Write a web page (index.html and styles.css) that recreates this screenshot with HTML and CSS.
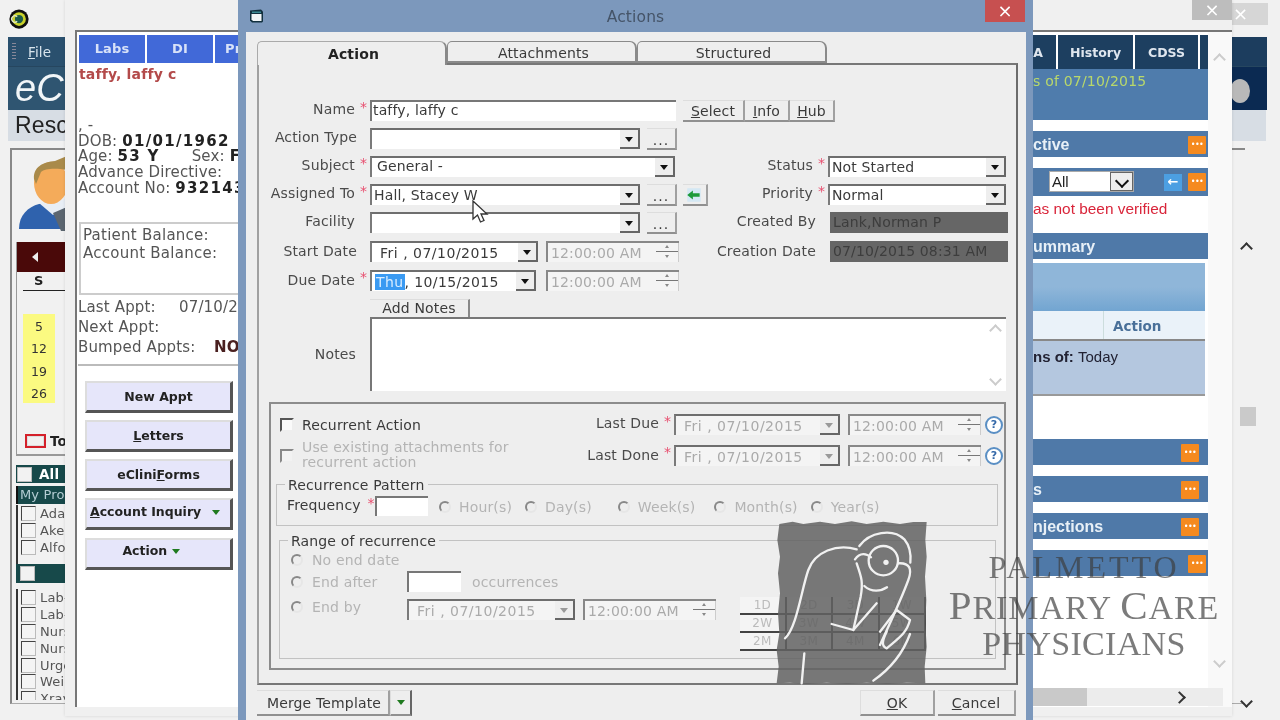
FILE: index.html
```html
<!DOCTYPE html>
<html lang="en">
<head>
<meta charset="utf-8">
<title>Actions</title>
<link rel="stylesheet" href="styles.css">
</head>
<body>
<div class="desk">

  <section class="win back">
    <div class="back-top">
      <svg class="app-logo" viewBox="0 0 24 24"><circle cx="12" cy="12" r="10.5" fill="#111"/><circle cx="12" cy="12" r="7.5" fill="#c9d22b"/><circle cx="12" cy="12" r="4.5" fill="#1c5a4a"/><path d="M10 9.500a3.500 3.500 0 1 0 0 5" fill="none" stroke="#dfe8c8" stroke-width="1.400"/></svg>
      <span class="back-close">×</span>
    </div>
    <div class="back-bar">
      <div class="menu-row"><i class="grip"></i><span class="menu-item"><u>F</u>ile</span></div>
      <div class="brand-row">eC</div>
    </div>
    <div class="back-strip">Resc</div>
    <div class="back-box">
      <svg class="user-pic" viewBox="0 0 48 76"><path d="M0 74c0-14 9-22 20-25l28-3v28z" fill="#2f62ad"/><path d="M20 48l14 12 14-8v-8l-20 2z" fill="#e8eef5"/><path d="M34 58l8 18h6V52z" fill="#5c6670"/><ellipse cx="32" cy="28" rx="17" ry="21" fill="#f4ab5a"/><path d="M15 24c-1-12 9-17 21-18l12-5v14c-10-2-22-2-26 2l-5 12z" fill="#a98a4a"/></svg>
      <div class="cal">
        <div class="cal-head"><i class="cal-prev"></i></div>
        <div class="cal-day">S</div>
        <ul class="cal-dates"><li>5</li><li>12</li><li>19</li><li>26</li></ul>
      </div>
      <div class="today"><i class="today-box"></i><b>To</b></div>
      <div class="green-bar"><i class="chk chk-w"></i><b>All</b></div>
      <div class="prov-head">My Prov</div>
      <ul class="chk-list">
        <li><i class="chk"></i>Adan</li><li><i class="chk"></i>Aker</li><li><i class="chk"></i>Alfor</li>
      </ul>
      <div class="green-bar green-bar-2"><i class="chk chk-w"></i></div>
      <ul class="chk-list chk-list-2">
        <li><i class="chk"></i>Lab-</li><li><i class="chk"></i>Lab-</li><li><i class="chk"></i>Nurs</li><li><i class="chk"></i>Nurs</li><li><i class="chk"></i>Urge</li><li><i class="chk"></i>Weig</li><li><i class="chk"></i>Xrav</li>
      </ul>
    </div>
    <div class="back-scroll">
      <span class="chev chev-up"></span>
      <span class="back-thumb"></span>
      <span class="chev chev-down"></span>
    </div>
  </section>

  <section class="win mid">
    <div class="mid-top"><span class="mid-close">×</span></div>
    <div class="mid-body">
      <div class="pt">
        <div class="pt-tabs"><span>Labs</span><span>DI</span><span class="pt-tab-3">Pr</span></div>
        <div class="pt-name">taffy, laffy c</div>
        <div class="pt-info">
          <div>, -</div>
          <div>DOB: <b>01/01/1962</b></div>
          <div>Age: <b>53 Y</b> <span class="pt-sex">Sex: <b>F</b></span></div>
          <div>Advance Directive:</div>
          <div>Account No: <b>932143</b></div>
        </div>
        <div class="pt-bal">
          <div>Patient Balance:</div>
          <div>Account Balance:</div>
        </div>
        <div class="pt-appts">
          <div><span class="appt-l">Last Appt:</span>07/10/2</div>
          <div>Next Appt:</div>
          <div><span class="appt-l">Bumped Appts:</span><b>NO</b></div>
        </div>
        <div class="pt-btns">
          <button class="side-btn">New Appt</button>
          <button class="side-btn"><u>L</u>etters</button>
          <button class="side-btn">eClini<u>F</u>orms</button>
          <button class="side-btn side-btn-l"><u>A</u>ccount Inquiry <i class="tri-g"></i></button>
          <button class="side-btn side-btn-a"><span class="nudge">Action <i class="tri-g tri-g-near"></i></span></button>
        </div>
      </div>
      <div class="summary">
        <div class="sum-tabs"><span class="t-a">A</span><span class="t-h">History</span><span class="t-c">CDSS</span><span class="t-x"></span></div>
        <div class="sum-hero">s of 07/10/2015</div>
        <div class="sum-bar">ctive<i class="dots"></i></div>
        <div class="sum-bar sum-bar-sel">
          <span class="all-sel"><span>All</span><i class="all-drop"></i></span>
          <i class="back-arrow"></i><i class="dots"></i>
        </div>
        <div class="sum-warn">as not been verified</div>
        <div class="sum-bar sum-bar-s">ummary</div>
        <div class="sum-grad"></div>
        <div class="sum-th"><span>Action</span></div>
        <div class="sum-row">ns of: <span>Today</span></div>
        <div class="sum-blank"></div>
        <div class="sum-bar sum-bar-m"><i class="dots dots-l"></i></div>
        <div class="sum-bar sum-bar-m">s<i class="dots dots-l"></i></div>
        <div class="sum-bar sum-bar-m">njections<i class="dots dots-l"></i></div>
        <div class="sum-bar sum-bar-m"><i class="dots"></i></div>
      </div>
      <div class="mid-scroll">
        <span class="chev chev-up chev-pale"></span>
        <span class="chev chev-down chev-pale"></span>
      </div>
    </div>
    <div class="mid-hscroll"><span class="h-thumb"></span><span class="h-next"></span></div>
  </section>

  <section class="win dlg">
    <header class="dlg-title">
      <svg class="dlg-icon" viewBox="0 0 14 14"><path d="M0 1.500l11-1 2 2v10l-1 1H2l-2-2z" fill="#12303f"/><path d="M1.500 5h10v7H3l-1.500-1.500z" fill="#f2f6f8"/><path d="M2 2.500h9v1.500H2z" fill="#3c8a94"/></svg>
      <span class="dlg-name">Actions</span>
      <span class="dlg-close">×</span>
    </header>
    <div class="dlg-body">
      <nav class="tabs">
        <span class="tab tab-on">Action</span>
        <span class="tab">Attachments</span>
        <span class="tab">Structured</span>
      </nav>
      <div class="panel">

        <div class="row">
          <label class="lbl">Name</label><span class="star">*</span>
          <span class="inp w-name">taffy, laffy c</span>
          <span class="btn-set">
            <span class="btn b-sel"><u>S</u>elect</span><span class="btn b-inf"><u>I</u>nfo</span><span class="btn b-hub"><u>H</u>ub</span>
          </span>
        </div>
        <div class="row">
          <label class="lbl lbl-ns">Action Type</label><span class="star star-ns"></span>
          <span class="combo w-270"><span class="val"></span><i class="drop"></i></span>
          <span class="btn dots-btn">...</span>
        </div>
        <div class="row">
          <label class="lbl">Subject</label><span class="star">*</span>
          <span class="combo w-305"><span class="val val-in">General -</span><i class="drop"></i></span>
          <div class="rgroup">
            <label class="lbl">Status</label><span class="star">*</span>
            <span class="combo w-178"><span class="val">Not Started</span><i class="drop"></i></span>
          </div>
        </div>
        <div class="row">
          <label class="lbl">Assigned To</label><span class="star">*</span>
          <span class="combo w-270"><span class="val">Hall, Stacey W</span><i class="drop"></i></span>
          <span class="btn dots-btn">...</span>
          <span class="btn arrow-btn"><svg viewBox="0 0 16 16"><rect x="2" y="2" width="12" height="12" fill="#d4e8f4"/><path d="M2 8l5-4v2.500h6v3H7V12z" fill="#1c9a3a"/></svg></span>
          <div class="rgroup">
            <label class="lbl">Priority</label><span class="star">*</span>
            <span class="combo w-178"><span class="val">Normal</span><i class="drop"></i></span>
          </div>
        </div>
        <div class="row">
          <label class="lbl">Facility</label><span class="star"></span>
          <span class="combo w-270"><span class="val"></span><i class="drop"></i></span>
          <span class="btn dots-btn">...</span>
          <div class="rgroup rgroup-ro">
            <label class="lbl">Created By</label>
            <span class="ro">Lank,Norman P</span>
          </div>
        </div>
        <div class="row row-d">
          <label class="lbl lbl-ns">Start Date</label><span class="star star-ns"></span>
          <span class="combo w-168"><span class="val val-d">Fri , 07/10/2015</span><i class="drop"></i></span>
          <span class="time"><span>12:00:00 AM</span><i class="spin"></i></span>
          <div class="rgroup rgroup-ro">
            <label class="lbl">Creation Date</label>
            <span class="ro">07/10/2015 08:31 AM</span>
          </div>
        </div>
        <div class="row row-d">
          <label class="lbl">Due Date</label><span class="star">*</span>
          <span class="combo w-166"><span class="val val-s"><span class="sel">Thu</span>, 10/15/2015</span><i class="drop"></i></span>
          <span class="time time-2"><span>12:00:00 AM</span><i class="spin"></i></span>
        </div>
        <div class="notes-tab"><span>Add Notes</span></div>
        <div class="notes-row">
          <label class="lbl">Notes</label><span class="star"></span>
          <div class="notes"><span class="chev chev-up chev-pale"></span><span class="chev chev-down chev-pale"></span></div>
        </div>

        <div class="group">
          <div class="rec-row">
            <i class="chk chk-big"></i><span class="rec-text">Recurrent Action</span>
            <label class="lbl">Last Due</label><span class="star">*</span>
            <span class="combo combo-off w-166"><span class="val val-d">Fri , 07/10/2015</span><i class="drop"></i></span>
            <span class="time"><span>12:00:00 AM</span><i class="spin"></i></span>
            <i class="help">?</i>
          </div>
          <div class="rec-row rec-row-2">
            <i class="chk chk-big chk-off"></i><span class="rec-text rec-off">Use existing attachments for<br>recurrent action</span>
            <label class="lbl">Last Done</label><span class="star">*</span>
            <span class="combo combo-off w-166"><span class="val val-d">Fri , 07/10/2015</span><i class="drop"></i></span>
            <span class="time"><span>12:00:00 AM</span><i class="spin"></i></span>
            <i class="help">?</i>
          </div>

          <fieldset class="fs fs-1">
            <legend>Recurrence Pattern</legend>
            <div class="freq">
              <label class="freq-l">Frequency</label><span class="star">*</span>
              <span class="inp w-freq"></span>
              <span class="opt o-1"><i class="radio"></i>Hour(s)</span>
              <span class="opt o-2"><i class="radio"></i>Day(s)</span>
              <span class="opt o-3"><i class="radio"></i>Week(s)</span>
              <span class="opt o-4"><i class="radio"></i>Month(s)</span>
              <span class="opt o-5"><i class="radio"></i>Year(s)</span>
            </div>
          </fieldset>

          <fieldset class="fs fs-2">
            <legend>Range of recurrence</legend>
            <div class="range">
              <div class="range-l">
                <div class="r-row r-1"><i class="radio"></i><span class="r-text">No end date</span></div>
                <div class="r-row r-2"><i class="radio"></i><span class="r-text">End after</span><span class="inp w-occ"></span><span class="r-occ">occurrences</span></div>
                <div class="r-row r-3"><i class="radio"></i><span class="r-text">End by</span>
                  <span class="combo combo-off w-168"><span class="val val-d">Fri , 07/10/2015</span><i class="drop"></i></span>
                  <span class="time"><span>12:00:00 AM</span><i class="spin"></i></span>
                </div>
              </div>
              <div class="quick">
                <span>1D</span><span>2D</span><span>3D</span><span>1W</span>
                <span>2W</span><span>3W</span><span>4W</span><span>5W</span>
                <span>2M</span><span>3M</span><span>4M</span><span>6M</span>
              </div>
            </div>
          </fieldset>
        </div>
      </div>
      <footer class="dlg-foot">
        <span class="btn f-merge">Merge Template</span>
        <span class="btn f-split"><i class="tri-g"></i></span>
        <span class="btn f-ok"><u>O</u>K</span>
        <span class="btn f-cancel"><u>C</u>ancel</span>
      </footer>
    </div>
  </section>

  <svg class="cursor" viewBox="0 0 18 24"><path d="M2 1v18l4.500-4 3 7 3.500-1.500-3-6.500h6z" fill="#fff" stroke="#333" stroke-width="1.300"/></svg>

  <svg class="wm-mark" viewBox="0 0 960 960">
    <path d="M178 372L218 365L250 372L300 365L345 372L395 364L440 372L490 365L540 372L580 366L620 366L616 420L620 470L615 530L619 600L616 670L620 740L614 800L616 850L560 848L500 852L440 848L380 852L320 848L260 852L210 848L170 850L176 800L170 750L178 700L174 640L180 580L174 520L180 470L172 420Z" fill="#626262" fill-opacity=".85"/>
    <g fill="none" stroke="#f1f1f1" stroke-width="7" stroke-linecap="round" stroke-linejoin="round">
      <path d="M195 715c35-30 50-150 70-205 20-55 85-80 145-62"/>
      <path d="M418 438c30-42 100-55 135-20 18 22 20 50 18 70"/>
      <circle cx="490" cy="482" r="44"/>
      <path d="M405 478c15-22 35-18 48-6"/>
      <path d="M535 490c35-2 42 18 30 50-22 60-60 140-85 195"/>
      <path d="M433 558c22 20 50 16 68 4"/>
      <path d="M410 490c14 40 20 55 12 100l-22 100"/>
      <path d="M335 672l65 18 70-80"/>
      <path d="M480 695l50-65 40 30c-10 40-35 55-70 85-15-6-15-20 0-50"/>
      <path d="M245 850l8-90"/>
      <path d="M460 842c50-35 90-85 110-140"/>
    </g>
    <circle cx="498" cy="487" r="8" fill="#f1f1f1"/>
  </svg>
  <div class="wm-text">
    <div class="wm-1">PALMETTO</div>
    <div class="wm-2"><span class="wm-cap">P</span>RIMARY <span class="wm-cap">C</span>ARE</div>
    <div class="wm-3">PHYSICIANS</div>
  </div>
</div>
</body>
</html>
```
FILE: styles.css
```css
* { box-sizing: border-box; }
html, body { margin: 0; padding: 0; }
body { background: #f0f0f0; }
i { display: inline-block; font-style: normal; }
ul { list-style: none; margin: 0; padding: 0; }
u { text-decoration: underline; }

.desk {
  position: relative;
  width: 1280px;
  height: 720px;
  overflow: hidden;
  font-family: "DejaVu Sans", sans-serif;
  font-size: 14px;
  letter-spacing: .15px;
  color: #3a3a3a;
  filter: blur(.5px);
}
.win { position: absolute; top: 0; }

/* far window */
.back { left: 0; width: 1280px; height: 720px; background: #f1f1f1; }
.back-top { height: 37px; position: relative; }
.app-logo { position: absolute; left: 8px; top: 8px; width: 22px; height: 22px; }
.back-close { position: absolute; left: 1232px; top: 3px; width: 36px; height: 22px; background: #d6d6d6; color: #fff; font-size: 18px; line-height: 22px; padding-left: 1px; }
.back-bar { margin: 0 13px 0 8px; height: 73px; background: linear-gradient(90deg, #2f5571 0, #2f5571 10%, #0b2a52 90%); position: relative; }
.back-bar::after { content: ""; position: absolute; left: 1222px; top: 42px; width: 20px; height: 24px; border-radius: 50%; background: #b9b9b9; }
.menu-row { height: 30px; display: flex; align-items: center; padding-left: 4px; background: linear-gradient(90deg, #2a506e 0, #2a506e 10%, #1c3d5e 90%); color: #d8e4ec; border-bottom: 1px solid #26465f; }
.grip { width: 4px; height: 18px; background: repeating-linear-gradient(#889 0 1px, transparent 1px 3px); margin-right: 12px; }
.menu-item { font-size: 13.5px; }
.brand-row { height: 43px; color: #f2f6f8; font-family: "Liberation Sans", sans-serif; font-style: italic; font-size: 38px; line-height: 43px; padding-left: 7px; }
.back-strip { margin: 0 14px 0 8px; height: 31px; background: #d7dde4; font-family: "Liberation Sans", sans-serif; font-size: 23px; line-height: 30px; padding-left: 7px; color: #222; }
.back-box { position: absolute; left: 10px; top: 148px; width: 1235px; height: 556px; border-left: 2px solid #888; border-top: 2px solid #888; border-bottom: 1px solid #aaa; padding: 5px 0 0 4px; }
.user-pic { display: block; width: 48px; height: 76px; margin: 0 0 11px 3px; }
.cal { margin-left: 0; width: 120px; height: 214px; border-left: 1px solid #999; border-bottom: 2px solid #999; position: relative; }
.cal-head { height: 30px; background: #4a0909; display: flex; align-items: center; padding-left: 15px; }
.cal-prev { border: 5px solid transparent; border-right: 6px solid #eee; border-left: 0; }
.cal-day { margin-left: 6px; width: 60px; height: 19px; border-bottom: 1px solid #222; font-weight: bold; font-size: 13px; line-height: 18px; padding-left: 11px; color: #222; }
.cal-dates { margin: 23px 0 0 6px; padding-top: 2px; width: 32px; height: 89px; background: #fbfa81; text-align: center; font-size: 12.5px; line-height: 22.300px; color: #333; }
.today { position: absolute; left: 13px; top: 283px; display: flex; align-items: center; gap: 4px; font-size: 13.5px; color: #222; }
.today-box { width: 21px; height: 14px; border: 2px solid #d4202a; box-shadow: inset 0 0 0 1px #ddd; }
.green-bar { position: absolute; left: 4px; top: 315px; width: 80px; height: 18px; background: #17494a; color: #fff; display: flex; align-items: center; gap: 7px; font-size: 13.5px; padding-left: 1px; }
.green-bar-2 { top: 414px; height: 19px; padding-left: 4px; }
.prov-head { position: absolute; left: 4px; top: 336px; width: 80px; height: 18px; background: #17494a; color: #b5cdd4; font-size: 13px; line-height: 18px; padding-left: 2px; border-left: 2px solid #111; }
.chk { width: 15px; height: 15px; background: #f4f4f4; border: 1px solid #bbb; border-top-color: #444; border-left-color: #444; flex: none; }
.chk-w { background: #f2f2f2; border-color: #bbb; }
.chk-list { position: absolute; left: 4px; top: 355px; height: 59px; overflow: hidden; border-left: 2px solid #333; padding-left: 1px; font-size: 13px; color: #555; }
.chk-list li { height: 17px; display: flex; align-items: center; gap: 4px; margin-left: 2px; }
.chk-list-2 { top: 439px; height: 111px; }
.chk-list-2 li { height: 16.900px; }
.back-scroll { position: absolute; left: 1232px; top: 200px; width: 36px; height: 515px; }
.back-scroll .chev { position: absolute; left: 10px; }
.back-scroll .chev-up { top: 44px; }
.back-scroll .chev-down { top: 497px; }
.back-thumb { position: absolute; left: 8px; top: 207px; width: 16px; height: 19px; background: #cacaca; }

.chev { display: block; width: 9px; height: 9px; border-left: 2.500px solid #333; border-top: 2.500px solid #333; }
.chev-up { transform: rotate(45deg); }
.chev-down { transform: rotate(225deg); }
.chev-pale { border-color: #ccc; }

/* middle window */
.mid { left: 65px; width: 1167px; height: 716px; background: #f0f0f0; box-shadow: 0 0 3px rgba(0,0,0,.12); }
.mid-top { height: 30px; position: relative; }
.mid-close { position: absolute; right: 0; top: 0; width: 40px; height: 20px; background: #bdbdbd; color: #fff; font-size: 18px; line-height: 20px; text-align: center; }
.mid-body { margin-left: 10px; height: 677px; border-left: 2px solid #777; border-top: 2px solid #777; background: #fff; display: flex; }
.pt { width: 166px; flex: none; overflow: hidden; padding-left: 2px; white-space: nowrap; }
.pt-tabs { display: flex; height: 28px; margin-top: 3px; gap: 2px; }
.pt-tabs span { width: 66px; flex: none; background: #4169d8; color: #d8e2f8; font-weight: bold; font-size: 13px; line-height: 28px; text-align: center; }
.pt-tabs .pt-tab-3 { text-align: left; padding-left: 10px; }
.pt-name { margin-top: 2px; font-size: 14px; font-weight: bold; color: #b34a4a; height: 18px; line-height: 18px; }
.pt-info { margin-top: 35px; line-height: 15.700px; margin-left: -1px; font-size: 15px; color: #555; }
.pt-info b { color: #222; letter-spacing: 1.300px; }
.pt-sex { margin-left: 27px; }
.pt-bal { margin-top: 25px; width: 200px; height: 73px; border: 2px solid #ccc; padding: 2px 2px; line-height: 18px; font-size: 15px; letter-spacing: .25px; color: #555; }
.pt-appts { margin-top: 2px; width: 200px; border-bottom: 2px solid #bbb; margin-left: -1px; height: 69px; line-height: 20px; font-size: 15px; color: #555; }
.appt-l { display: inline-block; width: 101px; }
.pt-appts div:last-child .appt-l { width: 136px; }
.pt-appts b { color: #4a2020; }
.pt-btns { margin: 15px 0 0 6px; display: flex; flex-direction: column; gap: 7.250px; }
.side-btn { width: 148px; height: 32px; background: #e6e6fa; border: 2px solid #ddd; border-right: 3px solid #555; border-bottom: 3px solid #555; font: bold 12.5px "DejaVu Sans", sans-serif; color: #222; padding: 0; }
.side-btn-l { text-align: left; padding: 0 0 5px 3px; }
.side-btn-a { padding-bottom: 5px; }
.tri-g { width: 0; height: 0; border: 4px solid transparent; border-top: 5px solid #1f7a1f; border-bottom: 0; margin-left: 6px; vertical-align: middle; }
.tri-g-near { margin-left: 0; }
.nudge { margin-right: 15px; }

.summary { margin-left: auto; width: 200px; flex: none; font-family: "Liberation Sans", sans-serif; letter-spacing: 0; }
.sum-tabs { height: 34px; margin-top: 3px; display: flex; background: #fff; gap: 2px; }
.sum-tabs span { background: #1d3f60; color: #dfe6ee; font: bold 12.5px "DejaVu Sans", sans-serif; line-height: 36px; text-align: center; }
.sum-tabs .t-a { width: 48px; text-align: right; padding-right: 13px; }
.t-h { width: 75px; }
.t-c { width: 63px; }
.t-x { width: 8px; }
.sum-hero { height: 51px; background: #4f7cac; color: #b9d86a; font: 14px "DejaVu Sans", sans-serif; letter-spacing: .2px; padding: 4px 0 0 25px; }
.sum-bar { margin-top: 11px; height: 26px; background: #4f79a8; color: #e8f0f7; font-weight: bold; font-size: 16px; line-height: 25px; padding-left: 25px; display: flex; align-items: center; position: relative; }
.sum-bar-sel { height: 28px; justify-content: flex-end; }
.sum-bar-s { margin-top: 10px; }
.dots { position: absolute; right: 2px; top: 5px; width: 18px; height: 18px; background: #f58a1f; border-radius: 1px; }
.dots::after { content: "•••"; position: absolute; inset: 0; color: #fff; font: 8px/18px "DejaVu Sans", sans-serif; text-align: center; letter-spacing: -.5px; }
.dots-l { right: 9px; top: 5px; }
.sum-bar-m { margin-top: 11px; }
.all-sel { position: absolute; left: 41px; top: 3px; width: 85px; height: 21px; background: #fff; border: 1px solid #aaa; color: #222; font-weight: normal; font-size: 15px; line-height: 20px; padding-left: 2px; display: flex; justify-content: space-between; }
.all-drop { width: 23px; height: 19px; background: #eee; border: 1px solid #666; position: relative; }
.all-drop::after { content: ""; position: absolute; left: 6px; top: 3px; width: 8px; height: 8px; border-right: 2px solid #111; border-bottom: 2px solid #111; transform: rotate(45deg); }
.back-arrow { position: absolute; left: 156px; top: 6px; width: 18px; height: 17px; background: #4c9fe2; }
.back-arrow::after { content: "←"; position: absolute; inset: 0; color: #fff; font: bold 13px/16px "DejaVu Sans", sans-serif; text-align: center; }
.sum-warn { height: 27px; background: #fff; color: #d9253a; font-size: 15.400px; line-height: 26px; padding-left: 25px; }
.sum-grad { margin-top: 4px; width: 197px; height: 48px; background: linear-gradient(#8fb6d9 0, #8fb6d9 50%, #72a5d1 100%); }
.sum-th { width: 197px; height: 30px; background: #eaf2f9; border-bottom: 2px solid #888; display: flex; padding-left: 95px; }
.sum-th span { border-left: 1px solid #cdd; padding-left: 9px; width: 100px; font: bold 13.5px/31px "DejaVu Sans", sans-serif; color: #4a7099; }
.sum-row { width: 197px; height: 55px; background: #b4c7df; font-weight: bold; font-size: 15px; line-height: 32px; padding-left: 25px; border-bottom: 2px solid #999; color: #223; }
.sum-row span { font-weight: normal; }
.sum-blank { width: 197px; height: 29px; background: #fff; }
.sum-blank + .sum-bar { margin-top: 14px; }
.mid-scroll { width: 24px; flex: none; position: relative; background: #f9f9f9; }
.mid-scroll .chev { position: absolute; left: 7px; }
.mid-scroll .chev-up { top: 23px; }
.mid-scroll .chev-down { top: 625px; }
.mid-hscroll { position: absolute; left: 968px; top: 688px; width: 190px; height: 18px; background: #ececec; }
.h-thumb { position: absolute; left: 0; top: 0; width: 54px; height: 18px; background: #c9c9c9; }
.h-next { position: absolute; left: 142px; top: 5px; width: 9px; height: 9px; border-top: 2.500px solid #333; border-right: 2.500px solid #333; transform: rotate(45deg); }

/* dialog */
.dlg { left: 238px; width: 795px; height: 720px; background: #7c98bc; padding: 32px 7px 0 8px; }
.dlg-title { position: absolute; left: 0; right: 0; top: 0; height: 32px; }
.dlg-icon { position: absolute; left: 12px; top: 9px; width: 14px; height: 14px; }
.dlg-name { position: absolute; left: 0; right: 0; top: 8px; text-align: center; font-size: 15.500px; color: #455468; }
.dlg-close { position: absolute; right: 8px; top: 0; width: 40px; height: 22px; background: #c75050; color: #fff; text-align: center; font-size: 18px; line-height: 21px; }
.dlg-body { height: 688px; background: #eee; padding: 9px 0 0 11px; position: relative; }

.tabs { display: flex; height: 22px; position: relative; z-index: 1; }
.tab { width: 190px; height: 22px; border: 1px solid #8a8a8a; border-right-width: 2px; border-bottom-width: 2px; border-radius: 5px 7px 0 0; background: #eee; padding-left: 4px; text-align: center; line-height: 22px; color: #3a3a3a; }
.tab-on { height: 24px; border-bottom: 0; border-color: #aaa #888 #eee #aaa; font-weight: bold; color: #222; line-height: 24px; }

.panel { width: 761px; height: 622px; border: 2px solid #777; border-left-color: #a0a0a0; border-right-color: #6c6c6c; padding: 35px 10px 0 0; }
.row { display: flex; height: 21px; margin-bottom: 7px; }
.row-d { margin-top: 8px; }
.row-d .lbl { margin-top: 1px; }
.lbl { width: 96px; text-align: right; flex: none; line-height: 18px; color: #4a4a4a; white-space: nowrap; }
.lbl-ns { width: 98px; }
.star { width: 15px; flex: none; padding-left: 2px; color: #e85070; font-size: 14px; text-align: center; line-height: 14px; }
.star-ns { width: 13px; padding: 0; }
.inp { display: block; height: 21px; background: #fff; border-top: 2px solid #777; border-left: 2px solid #777; line-height: 17px; padding-left: 1px; flex: none; }
.w-name { width: 306px; }
.btn-set { display: flex; margin-left: 7px; }
.btn { display: block; height: 22px; flex: none; text-align: center; background: #eee; border-right: 2px solid #a0a0a0; border-bottom: 2px solid #909090; line-height: 20px; border-top: 1px solid #ddd; }
.b-sel { width: 62px; }
.b-inf { width: 45px; }
.b-hub { width: 45px; }
.combo { display: flex; height: 21px; flex: none; background: #fff; border-top: 2px solid #6e6e6e; border-left: 2px solid #7a7a7a; align-items: stretch; }
.val { flex: 1; line-height: 19px; padding-left: 2px; white-space: nowrap; overflow: hidden; }
.val-in { padding-left: 5px; line-height: 17px; }
.val-d { padding-left: 8px; letter-spacing: .5px; line-height: 20px; }
.val-s { padding-left: 3px; letter-spacing: .4px; line-height: 20px; }
.sel { background: #3a9af2; color: #d8ecff; padding: 0 1px; }
.drop { width: 20px; flex: none; background: #eee; border-right: 2px solid #666; border-bottom: 2px solid #666; position: relative; }
.drop::after { content: ""; position: absolute; left: 5px; top: 7px; border: 4px solid transparent; border-top: 5px solid #111; border-bottom: 0; }
.w-270 { width: 270px; }
.w-305 { width: 305px; }
.w-178 { width: 178px; }
.w-168 { width: 168px; }
.w-166 { width: 166px; }
.dots-btn { width: 30px; margin-left: 7px; font-weight: normal; letter-spacing: 1px; line-height: 23px; }
.arrow-btn { width: 25px; margin-left: 6px; }
.arrow-btn svg { width: 18px; height: 18px; display: block; margin: 1px 0 0 2px; }
.rgroup { margin-left: auto; display: flex; }
.rgroup-ro { margin-right: -2px; }
.rgroup-ro .lbl { width: 110px; margin-right: 14px; }
.ro { width: 178px; height: 21px; background: #666; color: #3d3d3d; line-height: 21px; padding-left: 3px; white-space: nowrap; }
.time { display: flex; width: 133px; height: 21px; flex: none; margin-left: 8px; border-top: 2px solid #888; border-left: 2px solid #888; background: #f4f4f4; color: #aaa; line-height: 20px; padding-left: 3px; justify-content: space-between; white-space: nowrap; }
.time-2 { margin-left: 10px; }
.spin { width: 23px; height: 19px; position: relative; background: linear-gradient(transparent 0 8px, #777 8px 9px, transparent 9px); border-right: 1px solid #ccc; }
.spin::before, .spin::after { content: ""; position: absolute; left: 9px; border: 2px solid transparent; }
.spin::before { top: 2px; border-bottom: 3px solid #888; border-top: 0; }
.spin::after { top: 12px; border-top: 3px solid #888; border-bottom: 0; }
.notes-tab { margin: 8px 0 0 111px; height: 18px; }
.notes-tab span { display: block; width: 100px; height: 18px; text-align: center; line-height: 16px; background: #eee; border-right: 2px solid #888; border-top: 1px solid #ddd; }
.notes-row { display: flex; height: 74px; align-items: center; }
.notes-row .lbl { width: 97px; }
.notes-row .star { width: 14px; padding: 0; }
.notes { width: 636px; height: 74px; flex: none; background: #fff; border-top: 2px solid #777; border-left: 2px solid #777; position: relative; }
.notes .chev { position: absolute; right: 6px; }
.notes .chev-up { top: 7px; }
.notes .chev-down { top: 56px; }

.group { margin: 11px 0 0 10px; width: 737px; height: 268px; border: 2px solid #8c8c8c; padding: 11px 1px 0 9px; position: relative; }
.rec-row { display: flex; align-items: flex-start; height: 21px; }
.rec-row-2 { margin-top: 10px; }
.rec-row .lbl { width: 85px; margin: -1px 0 0 auto; }
.rec-row-2 .lbl { margin-top: 0; }
.rec-row .star { margin-top: -1px; }
.rec-row .combo, .rec-row .time { margin-top: -1px; }
.rec-row .help { margin-top: 1px; }
.chk-big { width: 14px; height: 14px; margin-top: 3px; background: #fafafa; border: 2px solid #eee; border-top-color: #555; border-left-color: #555; }
.chk-off { border-top-color: #888; border-left-color: #888; background: #f2f2f2; }
.rec-text { margin: 1px 0 0 8px; line-height: 18px; }
.rec-off { color: #b4b4b4; line-height: 15px; margin-top: -6px; }
.help { width: 18px; height: 18px; margin-left: 4px; border: 2px solid #5a8fc4; border-radius: 50%; background: #fff; color: #3468a8; font: bold 11px/14px "DejaVu Sans", sans-serif; text-align: center; flex: none; }

.fs { margin: 0; padding: 0; border: 1px solid #c2c2c2; min-width: 0; background: transparent; }
.fs legend { padding: 0 3px; margin-left: 8px; line-height: 16px; height: 16px; white-space: nowrap; }
.fs-1 { margin: 9px 0 0 -4px; width: 722px; height: 50px; }
.fs-1 legend { padding-top: 1px; line-height: 17px; }
.freq { display: flex; height: 20px; margin-top: 4px; padding-left: 10px; align-items: flex-start; }
.freq-l { width: 80px; line-height: 18px; flex: none; }
.freq .star { width: 8px; padding: 0; }
.w-freq { width: 53px; height: 20px; }
.opt { color: #b4b4b4; display: flex; align-items: center; height: 22px; white-space: nowrap; }
.opt .radio { margin-right: 8px; }
.o-1 { margin-left: 11px; }
.o-2 { margin-left: 13px; }
.o-3 { margin-left: 26px; }
.o-4 { margin-left: 19px; }
.o-5 { margin-left: 13px; }
.radio { width: 12px; height: 12px; border: 2px solid; border-color: #888 #e6e6e6 #e6e6e6 #888; border-radius: 50%; flex: none; }
.fs-2 { margin: 6px 0 0 -1px; width: 717px; height: 127px; }
.fs-2 legend { line-height: 18px; }
.range { display: flex; padding-left: 11px; }
.range-l { width: 449px; flex: none; }
.r-row { display: flex; align-items: center; color: #b4b4b4; white-space: nowrap; }
.r-1 { height: 18px; margin-top: 3px; }
.r-2 { height: 21px; margin-top: 2px; }
.r-3 { height: 21px; margin-top: 7px; }
.r-3 .radio, .r-3 .r-text { margin-top: -6px; }
.r-text { width: 95px; margin-left: 9px; flex: none; }
.w-occ { width: 54px; height: 21px; }
.r-occ { margin-left: 11px; }
.combo-off { color: #aaa; background: #f4f4f4; }
.combo-off .val { color: #aaa; }
.combo-off .drop::after { border-top-color: #999; }
.quick { margin: 49px 0 0 0; width: 186px; height: 54px; display: grid; grid-template-columns: repeat(4, 1fr); grid-template-rows: repeat(3, 18px); }
.quick span { border-right: 2px solid #444; border-bottom: 2px solid #444; background: #f4f4f4; color: #bbb; text-align: center; font-size: 12px; line-height: 17px; }

.dlg-foot { position: absolute; left: 11px; right: 10px; top: 658px; height: 26px; display: flex; }
.f-merge { width: 133px; height: 26px; padding-left: 3px; line-height: 24px; }
.f-split { width: 22px; height: 26px; border-left: 1px solid #ddd; border-right: 2px solid #666; position: relative; }
.f-split .tri-g { margin: 0; position: absolute; left: 6px; top: 9px; }
.f-ok { margin-left: auto; width: 75px; height: 26px; line-height: 24px; border-left: 1px solid #ddd; }
.f-cancel { margin-left: 3px; width: 78px; height: 26px; line-height: 24px; }

/* overlays */
.cursor { position: absolute; left: 471px; top: 200px; width: 18px; height: 24px; }
.wm-mark { position: absolute; left: 720px; top: 400px; width: 320px; height: 320px; pointer-events: none; }
.wm-text { position: absolute; left: 934px; top: 548px; width: 300px; text-align: center; font-family: "Liberation Serif", serif; color: rgba(60,60,60,.68); white-space: nowrap; letter-spacing: 0; }
.wm-1 { font-size: 32px; line-height: 38px; letter-spacing: 3px; }
.wm-2 { font-size: 34px; line-height: 39px; letter-spacing: .9px; height: 39px; }
.wm-cap { font-size: 41px; line-height: 39px; }
.wm-3 { font-size: 34px; line-height: 38px; letter-spacing: .3px; }
```
